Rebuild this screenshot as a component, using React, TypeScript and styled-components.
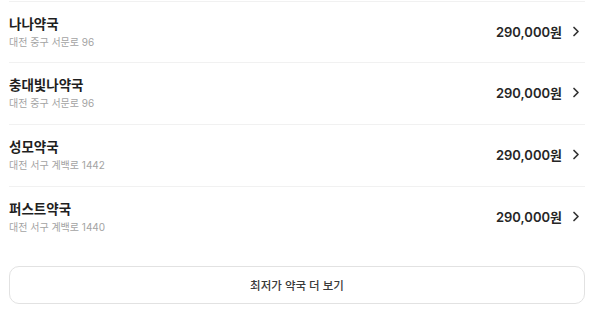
import React from 'react';
import styled, { createGlobalStyle } from 'styled-components';

const GlobalStyle = createGlobalStyle`
  html, body {
    margin: 0;
    padding: 0;
    background: #ffffff;
  }
  body {
    font-family: "Inter", "Noto Sans CJK KR", "Noto Sans", sans-serif;
    color: #222222;
  }
`;

const Page = styled.div`
  width: 599px;
  padding: 1px 14px 0 9px;
  box-sizing: border-box;
`;

const List = styled.ul`
  list-style: none;
  margin: 0;
  padding: 0;
`;

const Row = styled.li`
  display: flex;
  align-items: center;
  justify-content: space-between;
  height: 61px;
  border-top: 1px solid #f1f1f1;
  cursor: pointer;

  &:first-child {
    height: 60px;
  }
`;

const Info = styled.div`
  display: flex;
  flex-direction: column;
  gap: 2px;
  margin-top: -1px;
`;

const Name = styled.span`
  font-size: 13.5px;
  font-weight: 700;
  line-height: 18px;
  color: #1f1f1f;
`;

const Address = styled.span`
  font-size: 10px;
  line-height: 14px;
  color: #a3a3a3;
`;

const PriceBox = styled.div`
  display: flex;
  align-items: center;
  gap: 10px;
  margin: 0 5px 2px 0;
`;

const Price = styled.span`
  font-size: 13px;
  font-weight: 600;
  color: #262626;
`;

const Chevron = styled.svg`
  width: 8px;
  height: 11px;
  display: block;
`;

const MoreButton = styled.button`
  display: flex;
  align-items: center;
  justify-content: center;
  width: 576px;
  height: 38px;
  margin-top: 18px;
  border: 1px solid #e2e2e2;
  border-radius: 10px;
  background: #ffffff;
  font-family: inherit;
  font-size: 11.5px;
  font-weight: 500;
  color: #3a3a3a;
  cursor: pointer;
`;

interface Pharmacy {
  name: string;
  address: string;
  price: string;
}

const pharmacies: Pharmacy[] = [
  { name: '나나약국', address: '대전 중구 서문로 96', price: '290,000원' },
  { name: '충대빛나약국', address: '대전 중구 서문로 96', price: '290,000원' },
  { name: '성모약국', address: '대전 서구 계백로 1442', price: '290,000원' },
  { name: '퍼스트약국', address: '대전 서구 계백로 1440', price: '290,000원' },
];

const PharmacyRow: React.FC<{ item: Pharmacy }> = ({ item }) => (
  <Row>
    <Info>
      <Name>{item.name}</Name>
      <Address>{item.address}</Address>
    </Info>
    <PriceBox>
      <Price>{item.price}</Price>
      <Chevron viewBox="0 0 8 11" fill="none">
        <path d="M2 1.5 L6 5.5 L2 9.5" stroke="#333" strokeWidth="1.7" strokeLinecap="round" strokeLinejoin="round" />
      </Chevron>
    </PriceBox>
  </Row>
);

export default function App() {
  return (
    <>
      <GlobalStyle />
      <Page>
        <List>
          {pharmacies.map((p) => (
            <PharmacyRow key={p.name} item={p} />
          ))}
        </List>
        <MoreButton>최저가 약국 더 보기</MoreButton>
      </Page>
    </>
  );
}
